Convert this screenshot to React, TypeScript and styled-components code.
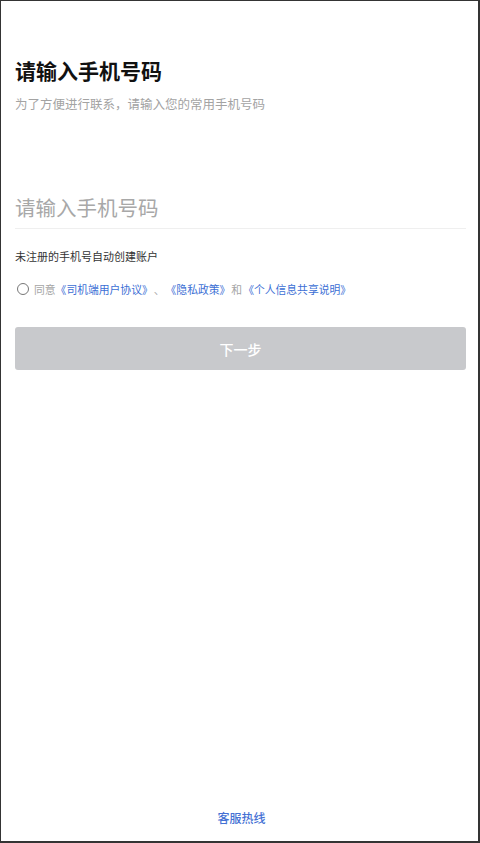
import React from "react";
import styled, { createGlobalStyle } from "styled-components";

const Global = createGlobalStyle`
  html, body { margin: 0; padding: 0; background: #fff; }
  body { font-family: "Noto Sans CJK SC", "Noto Sans", sans-serif; }
  * { box-sizing: border-box; }
`;

const Frame = styled.div`
  height: 843px;
  border-style: solid;
  border-color: #343434;
  border-width: 1px 2px 2px 1px;
  display: flex;
  flex-direction: column;
  padding: 0 12px 14px 14px;
`;

const Title = styled.h1`
  margin: 55px 0 0;
  font-size: 21px;
  line-height: 29px;
  font-weight: 700;
  color: #111;
`;

const Subtitle = styled.p`
  margin: 10px 0 0;
  font-size: 12.5px;
  line-height: 18px;
  color: #a3a3a3;
`;

const InputRow = styled.div`
  margin-top: 72px;
  height: 44px;
  display: flex;
  align-items: center;
  border-bottom: 1px solid #efefef;
`;

const PhoneInput = styled.input`
  border: none;
  outline: none;
  width: 100%;
  padding: 0;
  font-family: inherit;
  font-size: 20.5px;
  color: #333;
  background: transparent;
  &::placeholder { color: #a8a8a8; }
`;

const Note = styled.p`
  margin: 19px 0 0;
  font-size: 11px;
  line-height: 16px;
  color: #333;
`;

const AgreeRow = styled.div`
  margin-top: 17px;
  display: flex;
  align-items: center;
  font-size: 10.8px;
  line-height: 16px;
  color: #a5a5a5;
`;

const Radio = styled.span`
  width: 12px;
  height: 12px;
  border: 1px solid #777;
  border-radius: 50%;
  margin: 0 5px 0 2px;
  flex: none;
`;

const Link = styled.span`
  color: #3c6fd5;
`;

const Plain = styled.span`
  margin: 0 1px;
`;

const NextButton = styled.button`
  margin-top: 30px;
  height: 43px;
  width: 100%;
  border: none;
  border-radius: 3px;
  background: #c8c9cc;
  color: #fff;
  font-family: inherit;
  font-size: 14px;
  font-weight: 500;
`;

const Footer = styled.div`
  margin-top: auto;
  text-align: center;
  font-size: 12px;
  line-height: 18px;
  font-weight: 500;
  color: #4571d4;
  padding-left: 2px;
`;

export default function App() {
  return (
    <>
      <Global />
      <Frame>
        <Title>请输入手机号码</Title>
        <Subtitle>为了方便进行联系，请输入您的常用手机号码</Subtitle>
        <InputRow>
          <PhoneInput placeholder="请输入手机号码" />
        </InputRow>
        <Note>未注册的手机号自动创建账户</Note>
        <AgreeRow>
          <Radio />
          <span>同意</span>
          <Link>《司机端用户协议》</Link>
          <Plain>、</Plain>
          <Link>《隐私政策》</Link>
          <Plain>和</Plain>
          <Link>《个人信息共享说明》</Link>
        </AgreeRow>
        <NextButton>下一步</NextButton>
        <Footer>客服热线</Footer>
      </Frame>
    </>
  );
}
